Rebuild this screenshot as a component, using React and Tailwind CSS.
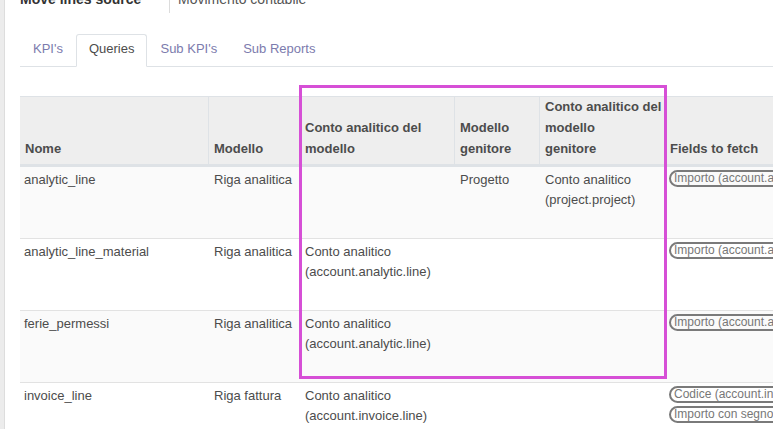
import React from 'react';

const cols = [
  { key: 'name', label: ['Nome'], w: 'w-[189px]' },
  { key: 'model', label: ['Modello'], w: 'w-[91px]' },
  { key: 'acc', label: ['Conto analitico del', 'modello'], w: 'w-[155px]' },
  { key: 'parent', label: ['Modello', 'genitore'], w: 'w-[85px]' },
  { key: 'pacc', label: ['Conto analitico del', 'modello', 'genitore'], w: 'w-[125px]' },
  { key: 'fields', label: ['Fields to fetch'], w: 'w-[160px]' },
];

const rows = [
  {
    name: 'analytic_line',
    model: 'Riga analitica',
    acc: [],
    parent: ['Progetto'],
    pacc: ['Conto analitico', '(project.project)'],
    fields: ['Importo (account.analytic.line)'],
  },
  {
    name: 'analytic_line_material',
    model: 'Riga analitica',
    acc: ['Conto analitico', '(account.analytic.line)'],
    parent: [],
    pacc: [],
    fields: ['Importo (account.analytic.line)'],
  },
  {
    name: 'ferie_permessi',
    model: 'Riga analitica',
    acc: ['Conto analitico', '(account.analytic.line)'],
    parent: [],
    pacc: [],
    fields: ['Importo (account.analytic.line)'],
  },
  {
    name: 'invoice_line',
    model: 'Riga fattura',
    acc: ['Conto analitico', '(account.invoice.line)'],
    parent: [],
    pacc: [],
    fields: ['Codice (account.invoice.line)', 'Importo con segno (account.invoice.line)'],
  },
];

const Tag = ({ children }) => (
  <span className="inline-block whitespace-nowrap rounded-full border-2 border-[#7a7a7a] px-[3px] text-[12px] leading-[13px] text-[#777]">
    {children}
  </span>
);

export default function App() {
  return (
    <div className="flex h-screen w-full overflow-hidden bg-white text-[#4c4c4c]" style={{ fontFamily: '"Liberation Sans", Arial, sans-serif' }}>
      {/* dotted left gutter */}
      <div className="w-[5px] shrink-0 border-r border-[#dddddd] bg-[#ececec]" />

      <div className="flex-1 overflow-hidden pl-[15px]">
        {/* record title */}
        <div className="-mt-[10px] flex h-[23px]">
          <div className="w-[149px] text-[14px] font-bold leading-[18px] text-[#333]">Move lines source</div>
          <div className="border-l border-[#dcdcdc] pl-[8px] text-[14px] leading-[18px] text-[#555]">Movimento contabile</div>
        </div>

        {/* tabs */}
        <div className="mt-[21px] flex border-b border-[#dee2e6] text-[13px] leading-[18px]">
          <div className="border border-transparent px-3 pb-[7px] pt-[5px] text-[#7c7bad]">KPI's</div>
          <div className="-mb-px rounded-t-[3px] border border-[#dee2e6] border-b-white bg-white px-3 pb-[7px] pt-[5px] text-[#4c4c4c]">Queries</div>
          <div className="border border-transparent px-3 pb-[7px] pt-[5px] text-[#7c7bad]">Sub KPI's</div>
          <div className="border border-transparent px-3 pb-[7px] pt-[5px] text-[#7c7bad]">Sub Reports</div>
        </div>

        {/* table */}
        <div className="relative mt-[29px] w-[900px] text-[13px]">
          <div className="flex h-[71px] border-t border-b-[3px] border-[#dee2e6] bg-[#eeeeee]">
            {cols.map((c, i) => (
              <div
                key={c.key}
                className={`${c.w} flex shrink-0 flex-col justify-end whitespace-nowrap px-[5px] pb-[5px] font-bold leading-[21px] ${i < cols.length - 1 ? 'border-r border-[#dee2e6]' : ''}`}
              >
                {c.label.map((l) => (
                  <div key={l}>{l}</div>
                ))}
              </div>
            ))}
          </div>

          {rows.map((r, i) => (
            <div key={r.name} className={`flex h-[72px] border-b border-[#e2e2e2] ${i % 2 === 0 ? 'bg-[#fafafa]' : 'bg-white'}`}>
              <div className="w-[189px] shrink-0 px-[4px] pt-[3px] leading-[20px]">{r.name}</div>
              <div className="w-[91px] shrink-0 px-[5px] pt-[3px] leading-[20px]">{r.model}</div>
              <div className="w-[155px] shrink-0 px-[5px] pt-[3px] leading-[20px]">
                {r.acc.map((l) => (
                  <div key={l}>{l}</div>
                ))}
              </div>
              <div className="w-[85px] shrink-0 px-[5px] pt-[3px] leading-[20px]">
                {r.parent.map((l) => (
                  <div key={l}>{l}</div>
                ))}
              </div>
              <div className="w-[125px] shrink-0 px-[5px] pt-[3px] leading-[20px]">
                {r.pacc.map((l) => (
                  <div key={l}>{l}</div>
                ))}
              </div>
              <div className="flex w-[160px] shrink-0 flex-col items-start gap-[3px] px-[4px] pt-[3px]">
                {r.fields.map((f) => (
                  <Tag key={f}>{f}</Tag>
                ))}
              </div>
            </div>
          ))}

          {/* highlight box */}
          <div className="pointer-events-none absolute left-[279px] top-[-11px] h-[294px] w-[368px] border-[3px] border-[#d64fd6]" />
        </div>
      </div>
    </div>
  );
}
